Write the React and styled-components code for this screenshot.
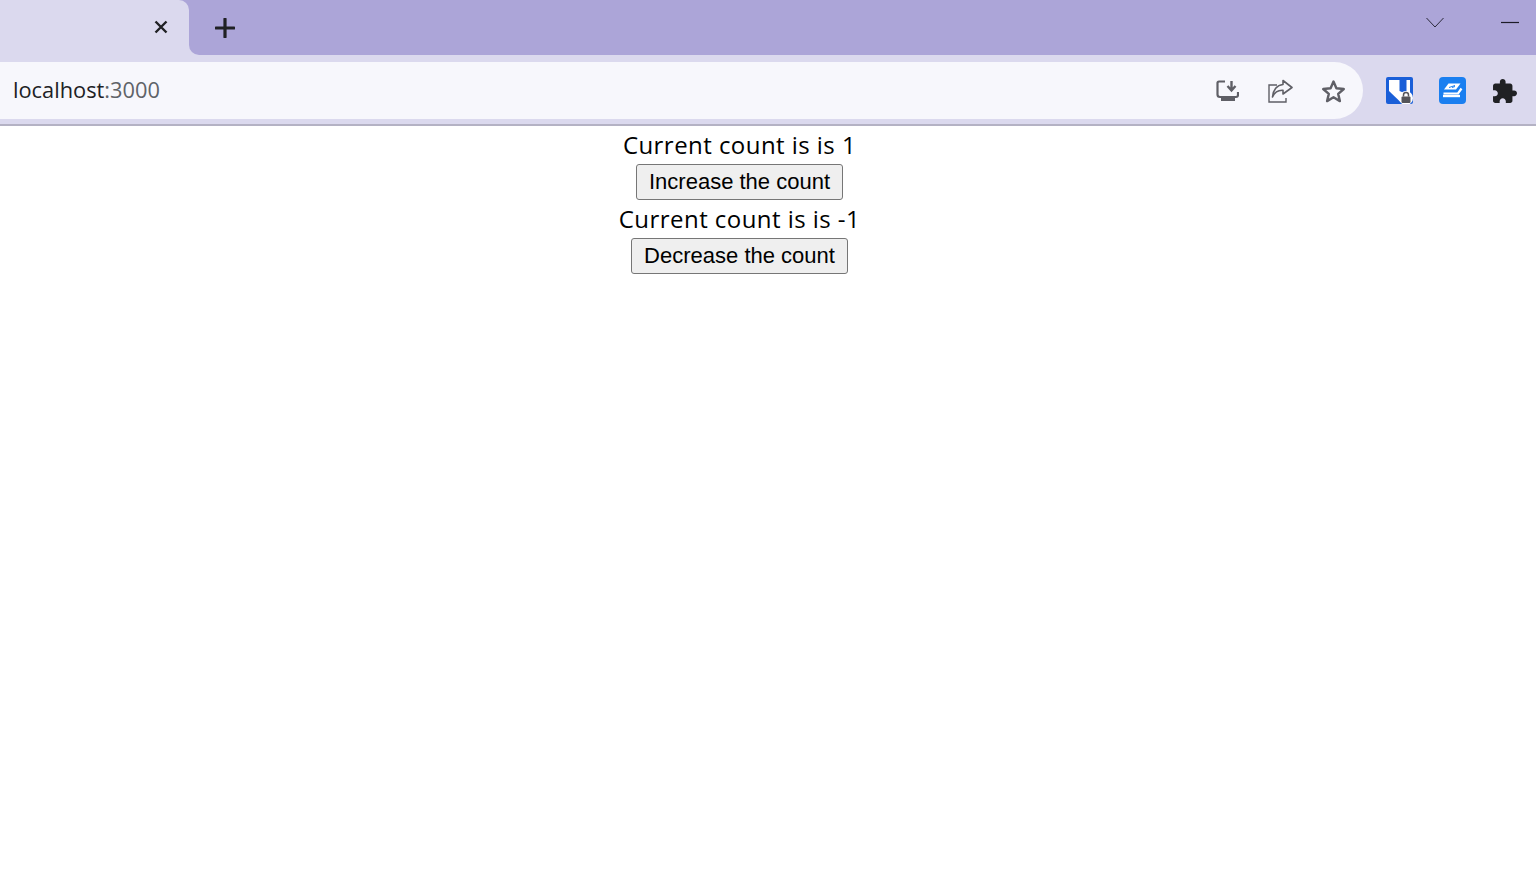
import React, { useState } from "react";
import styled, { createGlobalStyle } from "styled-components";

const tabStrip = "#aca5d8";
const toolbar = "#dbd9ee";
const iconGrey = "#5f5f66";

const GlobalStyle = createGlobalStyle`
  html, body {
    margin: 0;
    padding: 0;
    background: #fff;
  }
`;

const Strip = styled.div`
  display: flex;
  height: 55px;
  background: linear-gradient(to bottom, ${tabStrip} 50%, ${toolbar} 50%);
`;

const Tab = styled.div`
  display: flex;
  align-items: center;
  justify-content: flex-end;
  width: 189px;
  padding-right: 21px;
  padding-bottom: 1px;
  box-sizing: border-box;
  background: ${toolbar};
  border-top-right-radius: 10px;
`;

const StripRest = styled.div`
  flex: 1;
  display: flex;
  align-items: center;
  padding-left: 26px;
  background: ${tabStrip};
  border-bottom-left-radius: 10px;
`;

const WindowControls = styled.div`
  display: flex;
  align-items: flex-start;
  gap: 57px;
  margin-left: auto;
  margin-right: 17px;
  height: 100%;
  padding-top: 15px;
  box-sizing: border-box;
`;

const ToolbarRow = styled.div`
  display: flex;
  align-items: center;
  height: 71px;
  padding-top: 7px;
  padding-bottom: 5px;
  box-sizing: border-box;
  background: ${toolbar};
  border-bottom: 2px solid #b4b2c4;
`;

const AddressBar = styled.div`
  display: flex;
  align-items: center;
  justify-content: space-between;
  width: 1363px;
  height: 57px;
  padding: 0 17px 0 13px;
  box-sizing: border-box;
  background: #f7f7fc;
  border-radius: 0 29px 29px 0;
`;

const Url = styled.div`
  font-family: "Open Sans", sans-serif;
  font-size: 21.8px;
  color: #202124;
  margin-top: -2px;
`;

const Port = styled.span`
  color: #5f6368;
`;

const IconRow = styled.div`
  display: flex;
  align-items: center;
  gap: ${(p) => p.$gap}px;
`;

const Extensions = styled(IconRow)`
  margin-left: 23px;
`;

const Main = styled.main`
  width: 1479px;
  padding-top: 3px;
  text-align: center;
`;

const Count = styled.div`
  font-family: "Open Sans", sans-serif;
  font-size: 24px;
  letter-spacing: 0.45px;
  line-height: 32px;
  height: 35px;
  color: #000;
`;

const Button = styled.button`
  display: block;
  margin: 0 auto 3px;
  height: 36px;
  padding: 0 12px;
  font-family: "Liberation Sans", Arial, sans-serif;
  font-size: 22px;
  color: #000;
  background: #efefef;
  border: 1px solid #767676;
  border-radius: 3px;
`;

const CloseIcon = () => (
  <svg width="14" height="14" viewBox="0 0 14 14">
    <path d="M1.5 1.5 12.5 12.5M12.5 1.5 1.5 12.5" stroke="#202124" strokeWidth="2.4" />
  </svg>
);

const PlusIcon = () => (
  <svg width="20" height="20" viewBox="0 0 20 20">
    <path d="M10 1v18M1 10h18" stroke="#202124" strokeWidth="3.2" strokeLinecap="round" />
  </svg>
);

const ChevronIcon = () => (
  <svg width="18" height="14" viewBox="0 0 18 14">
    <path d="M.5 3 9 12 17.5 3" fill="none" stroke="#2b2a3a" strokeWidth="1" />
  </svg>
);

const MinimizeIcon = () => (
  <svg width="18" height="14" viewBox="0 0 18 14">
    <path d="M0 7.5h18" stroke="#1d1c28" strokeWidth="1.2" />
  </svg>
);

const InstallIcon = () => (
  <svg width="25" height="25" viewBox="0 0 25 25">
    <path d="M11 3.500H5A1.500 1.500 0 0 0 3.500 5v11.500A2.500 2.500 0 0 0 6 19h16a2 2 0 0 0 2-2v-3" fill="none" stroke={iconGrey} strokeWidth="2.200" />
    <path d="M17.500 3v9M13.500 8l4 4.500 4-4.500" fill="none" stroke={iconGrey} strokeWidth="2.400" />
    <path d="M7 19h14v4H7z" fill={iconGrey} />
  </svg>
);

const ShareIcon = () => (
  <svg width="26" height="24" viewBox="0 0 26 24">
    <path d="M10 6H2v17h17v-4" fill="none" stroke={iconGrey} strokeWidth="1.400" />
    <path d="M16 1.500 25 8.500 16 15v-3.700C11 11 7.500 13.500 5.500 18 6 11 10 6 16 5.500Z" fill="none" stroke={iconGrey} strokeWidth="1.600" strokeLinejoin="round" />
  </svg>
);

const StarIcon = () => (
  <svg width="25" height="24" viewBox="0 0 25 24">
    <path d="M12.500 2.500 15.400 9.300 22.800 10 17.200 14.900 18.900 22.100 12.500 18.300 6.100 22.100 7.800 14.900 2.200 10 9.600 9.300Z" fill="none" stroke={iconGrey} strokeWidth="2.400" strokeLinejoin="round" />
  </svg>
);

const VaultIcon = () => (
  <svg width="27" height="27" viewBox="0 0 27 27">
    <rect width="27" height="27" rx="2" fill="#1a5fd8" />
    <path d="M3 3h21v14c0 4-5 7-9 8.500L3 14Z" fill="#fff" />
    <path d="M13.500 3h7v14l-7-3Z" fill="#1a5fd8" />
    <circle cx="20" cy="21" r="7" fill="#fff" />
    <rect x="15.500" y="19.500" width="9" height="6.500" rx="1" fill="#55555a" />
    <path d="M17.500 19.500v-1.500a2.500 2.500 0 0 1 5 0v1.500" fill="none" stroke="#55555a" strokeWidth="1.500" />
  </svg>
);

const StackIcon = () => (
  <svg width="27" height="27" viewBox="0 0 27 27">
    <rect width="27" height="27" rx="4" fill="#1a7ff0" />
    <path d="M9.500 6.500h12L17 12.500H5Z" fill="#fff" />
    <path d="M10 10.500 16 8.500M13 10.500l3-1" stroke="#1a7ff0" strokeWidth="1" />
    <path d="M22.500 11.500 19 16.500H4.500" fill="none" stroke="#fff" strokeWidth="2.200" />
    <path d="M4 19h17" stroke="#fff" strokeWidth="2.400" />
  </svg>
);

const PuzzleIcon = () => (
  <svg width="25" height="24" viewBox="1.100 1 21.900 21">
    <path d="M20.500 11H19V7c0-1.100-.900-2-2-2h-4V3.500C13 2.120 11.880 1 10.500 1S8 2.120 8 3.500V5H4c-1.100 0-2 .900-2 2v3.800h1.500c1.500 0 2.700 1.200 2.700 2.700s-1.200 2.700-2.700 2.700H2V20c0 1.100.900 2 2 2h3.800v-1.500c0-1.500 1.200-2.700 2.700-2.700s2.700 1.200 2.700 2.700V22H17c1.100 0 2-.900 2-2v-4h1.500c1.380 0 2.500-1.120 2.500-2.500S21.880 11 20.500 11z" fill="#202124" />
  </svg>
);

export default function App() {
  const [up, setUp] = useState(1);
  const [down, setDown] = useState(-1);
  return (
    <>
      <GlobalStyle />
      <Strip>
        <Tab>
          <CloseIcon />
        </Tab>
        <StripRest>
          <PlusIcon />
          <WindowControls>
            <ChevronIcon />
            <MinimizeIcon />
          </WindowControls>
        </StripRest>
      </Strip>
      <ToolbarRow>
        <AddressBar>
          <Url>
            localhost<Port>:3000</Port>
          </Url>
          <IconRow $gap={28}>
            <InstallIcon />
            <ShareIcon />
            <StarIcon />
          </IconRow>
        </AddressBar>
        <Extensions $gap={26}>
          <VaultIcon />
          <StackIcon />
          <PuzzleIcon />
        </Extensions>
      </ToolbarRow>
      <Main>
        <Count>Current count is is {up}</Count>
        <Button onClick={() => setUp(up + 1)}>Increase the count</Button>
        <Count>Current count is is {down}</Count>
        <Button onClick={() => setDown(down - 1)}>Decrease the count</Button>
      </Main>
    </>
  );
}
